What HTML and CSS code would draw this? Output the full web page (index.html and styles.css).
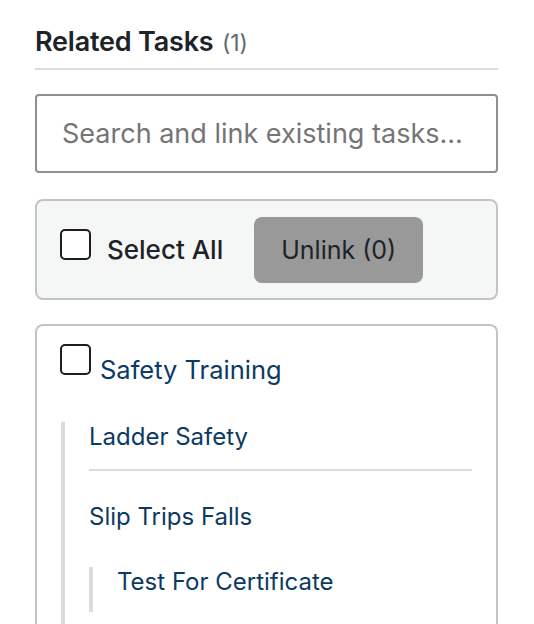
FILE: index.html
```html
<!DOCTYPE html>
<html lang="en">
<head>
  <meta charset="UTF-8" />
  <title>Related Tasks</title>
  <link rel="stylesheet" href="styles.css">
</head>
<body>
  <section class="related">
    <h2 class="related-title">Related Tasks <span class="count">(1)</span></h2>

    <input class="task-search" type="text" placeholder="Search and link existing tasks..." />

    <div class="bulk-bar">
      <label class="select-all">
        <input type="checkbox" class="check" />
        <span>Select All</span>
      </label>
      <button class="unlink-btn" type="button" disabled>Unlink (0)</button>
    </div>

    <div class="task-card">
      <label class="task-root">
        <input type="checkbox" class="check" />
        <a href="#">Safety Training</a>
      </label>

      <ul class="subtasks">
        <li class="subtask divided"><a href="#">Ladder Safety</a></li>
        <li class="subtask">
          <a href="#">Slip Trips Falls</a>
          <ul class="subtasks nested">
            <li class="subtask"><a href="#">Test For Certificate</a></li>
          </ul>
        </li>
      </ul>
    </div>
  </section>
</body>
</html>
```

FILE: styles.css
```css
body {
  margin: 0;
  font-family: Inter, "Noto Sans", Arial, sans-serif;
  background: #fff;
  color: #1d2327;
}

.related {
  width: 463px;
  padding: 27px 0 0 35px;
  display: flex;
  flex-direction: column;
  height: 597px;
  overflow: hidden;
}

.related-title {
  margin: 0;
  padding-bottom: 10px;
  border-bottom: 2px solid #dcdcde;
  font-size: 27px;
  font-weight: 600;
  line-height: 30px;
  letter-spacing: -0.2px;
}

.related-title .count {
  margin-left: 2px;
  font-size: 23px;
  font-weight: 400;
  color: #646970;
}

.task-search {
  margin-top: 24px;
  height: 79px;
  flex-shrink: 0;
  box-sizing: border-box;
  padding: 0 25px;
  border: 2px solid #8c8f94;
  border-radius: 4px;
  font-family: inherit;
  font-size: 27px;
  color: #1d2327;
}

.task-search::placeholder {
  color: #757575;
}

.bulk-bar {
  margin-top: 26px;
  height: 101px;
  flex-shrink: 0;
  box-sizing: border-box;
  padding: 0 23px;
  display: flex;
  align-items: center;
  gap: 31px;
  background: #f5f6f6;
  border: 2px solid #c3c4c7;
  border-radius: 8px;
}

.select-all {
  display: flex;
  align-items: center;
  gap: 16px;
  font-size: 26px;
  font-weight: 500;
  color: #1d2327;
}

.check {
  appearance: none;
  margin: 0;
  width: 31px;
  height: 31px;
  box-sizing: border-box;
  border: 2px solid #1e1e1e;
  border-radius: 5px;
  background: #fff;
  flex-shrink: 0;
}

.select-all .check {
  margin-top: -10px;
}

.unlink-btn {
  height: 66px;
  padding: 0 27px;
  border: none;
  border-radius: 8px;
  background: #999;
  color: #1d2327;
  font-family: inherit;
  font-size: 25px;
}

.task-card {
  margin-top: 24px;
  padding: 18px 24px 0 23px;
  border: 2px solid #c3c4c7;
  border-bottom: none;
  border-radius: 8px 8px 0 0;
  flex-shrink: 0;
  height: 400px;
}

.task-root {
  display: flex;
  align-items: flex-end;
  gap: 9px;
  font-size: 25.5px;
}

.task-root .check {
  margin-bottom: 10px;
}

a {
  color: #0b3a62;
  text-decoration: none;
}

.subtasks {
  list-style: none;
  margin: 37px 0 0 1px;
  padding: 0 0 60px 24px;
  border-left: 4px solid #dcdcde;
}

.subtask {
  font-size: 24px;
  line-height: 30px;
}

.subtask.divided {
  padding-bottom: 17px;
  margin-bottom: 31px;
  border-bottom: 2px solid #dcdcde;
}

.subtasks.nested {
  margin: 35px 0 0 0;
  padding: 0 0 15px 24px;
  border-left-width: 4px;
}
```
